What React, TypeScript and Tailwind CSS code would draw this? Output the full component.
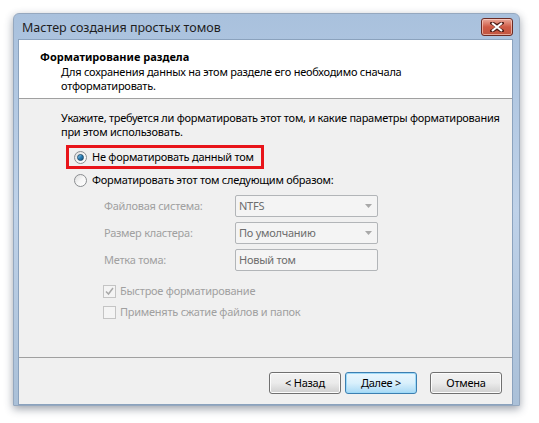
import React from "react";

const font = { fontFamily: '"Noto Sans", "Open Sans", Arial, sans-serif' };

function Radio({ checked }: { checked?: boolean }) {
  return (
    <span className="flex h-[13px] w-[13px] shrink-0 items-center justify-center rounded-full border border-[#8a8d90] bg-gradient-to-br from-[#dcdcdc] via-[#f6f6f6] to-white">
      {checked && (
        <span className="h-[7px] w-[7px] rounded-full border border-[#1d4d6e] bg-gradient-to-br from-[#8fd0f5] via-[#2c81b8] to-[#164f7c]" />
      )}
    </span>
  );
}

function Checkbox({ checked }: { checked?: boolean }) {
  return (
    <span className="flex h-[13px] w-[13px] shrink-0 items-center justify-center border border-[#c4c4c4] bg-[#f4f4f4]">
      {checked && (
        <svg width="9" height="9" viewBox="0 0 9 9">
          <path d="M1 4.5 L3.5 7 L8 1" fill="none" stroke="#a9a9a9" strokeWidth="1.5" />
        </svg>
      )}
    </span>
  );
}

function Field({ value, dropdown }: { value: string; dropdown?: boolean }) {
  return (
    <div className="flex h-[22px] w-[143px] items-center justify-between rounded-[2px] border border-[#b2b5b8] bg-[#f4f4f4] pl-[3px] pr-[5px] text-[#6d6d6d]">
      <span>{value}</span>
      {dropdown && (
        <svg width="7" height="4" viewBox="0 0 7 4">
          <path d="M0 0 H7 L3.5 4 Z" fill="#a8a8a8" />
        </svg>
      )}
    </div>
  );
}

function Button({ label, primary }: { label: string; primary?: boolean }) {
  return (
    <button
      className={
        primary
          ? "flex h-[22px] w-[72px] items-center justify-center rounded-[3px] border border-[#3c7fb1] bg-gradient-to-b from-[#eaf6fd] via-[#d9f0fc] to-[#a7d9f5] text-black shadow-[inset_0_0_0_1px_#9fdaf8]"
          : "flex h-[22px] w-[72px] items-center justify-center rounded-[3px] border border-[#707070] bg-gradient-to-b from-[#f2f2f2] via-[#ebebeb] to-[#cfcfcf] text-black shadow-[inset_0_0_0_1px_#fcfcfc]"
      }
    >
      {label}
    </button>
  );
}

export default function App() {
  return (
    <div className="h-[423px] w-[539px] bg-white pl-[13px] pt-[13px]" style={font}>
      <div className="flex h-[393px] w-[507px] flex-col rounded-t-[6px] border border-[#95a8bf] bg-gradient-to-b from-[#a9c1dd] via-[#bfd2e9] to-[#aac0d8] shadow-[0_3px_9px_rgba(40,50,70,0.45)]">
        {/* title bar */}
        <div className="flex h-[25px] shrink-0 items-start justify-between pl-[8px] pr-[6px]">
          <span className="whitespace-nowrap pt-[6px] text-[12.5px] leading-[16px] text-[#1e1e1e]">
            Мастер создания простых томов
          </span>
          <div className="mt-[4px] flex h-[18px] w-[32px] items-center justify-center rounded-[3px] border border-[#6b2b24] bg-gradient-to-b from-[#e9a99b] via-[#cf5a45] to-[#c0553f] shadow-[inset_0_0_0_1px_rgba(255,220,210,0.6)]">
            <svg width="14" height="10" viewBox="0 0 14 10">
              <path
                d="M2 1 L7 4 L12 1 M2 9 L7 6 L12 9"
                fill="none"
                stroke="#4a1a14"
                strokeWidth="3.6"
                strokeLinecap="square"
              />
              <path d="M2 1 L12 9 M12 1 L2 9" fill="none" stroke="#ffffff" strokeWidth="2.2" />
            </svg>
          </div>
        </div>

        {/* client */}
        <div className="ml-[4px] mr-[6px] flex flex-1 flex-col whitespace-nowrap border border-[#8ba2bd] bg-[#f0f0f0] text-[11px] tracking-[-0.25px] text-black">
          {/* header */}
          <div className="h-[59px] shrink-0 border-b border-[#a0a0a0] bg-white pl-[21px] pt-[9px]">
            <div className="font-bold leading-[16px] tracking-normal">Форматирование раздела</div>
            <div className="pl-[21px] leading-[14px]">
              Для сохранения данных на этом разделе его необходимо сначала
              <br />
              отформатировать.
            </div>
          </div>

          {/* body */}
          <div className="flex flex-1 flex-col border-b border-[#a0a0a0] pl-[42px] pt-[12px]">
            <div className="leading-[14px]">
              Укажите, требуется ли форматировать этот том, и какие параметры форматирования
              <br />
              при этом использовать.
            </div>

            <div className="ml-[5px] mt-[6px] flex h-[24px] w-[198px] items-center gap-[5px] border-[3px] border-[#e8141a] pl-[5px]">
              <Radio checked />
              <span>Не форматировать данный том</span>
            </div>

            <div className="ml-[13px] mt-[4px] flex h-[14px] items-center gap-[5px]">
              <Radio />
              <span>Форматировать этот том следующим образом:</span>
            </div>

            <div className="ml-[43px] mt-[8px] flex flex-col gap-[5px] text-[#a0a0a0]">
              <div className="flex items-center">
                <span className="w-[131px]">Файловая система:</span>
                <Field value="NTFS" dropdown />
              </div>
              <div className="flex items-center">
                <span className="w-[131px]">Размер кластера:</span>
                <Field value="По умолчанию" dropdown />
              </div>
              <div className="flex items-center">
                <span className="w-[131px]">Метка тома:</span>
                <Field value="Новый том" />
              </div>
            </div>

            <div className="ml-[42px] mt-[14px] flex flex-col gap-[8px] text-[#a0a0a0]">
              <div className="flex h-[13px] items-center gap-[4px]">
                <Checkbox checked />
                <span>Быстрое форматирование</span>
              </div>
              <div className="flex h-[13px] items-center gap-[4px]">
                <Checkbox />
                <span>Применять сжатие файлов и папок</span>
              </div>
            </div>
          </div>

          {/* footer */}
          <div className="flex h-[46px] shrink-0 items-start justify-end gap-[4px] pr-[10px] pt-[14px]">
            <Button label="< Назад" />
            <Button label="Далее >" primary />
            <div className="w-[5px]" />
            <Button label="Отмена" />
          </div>
        </div>
      </div>
    </div>
  );
}
